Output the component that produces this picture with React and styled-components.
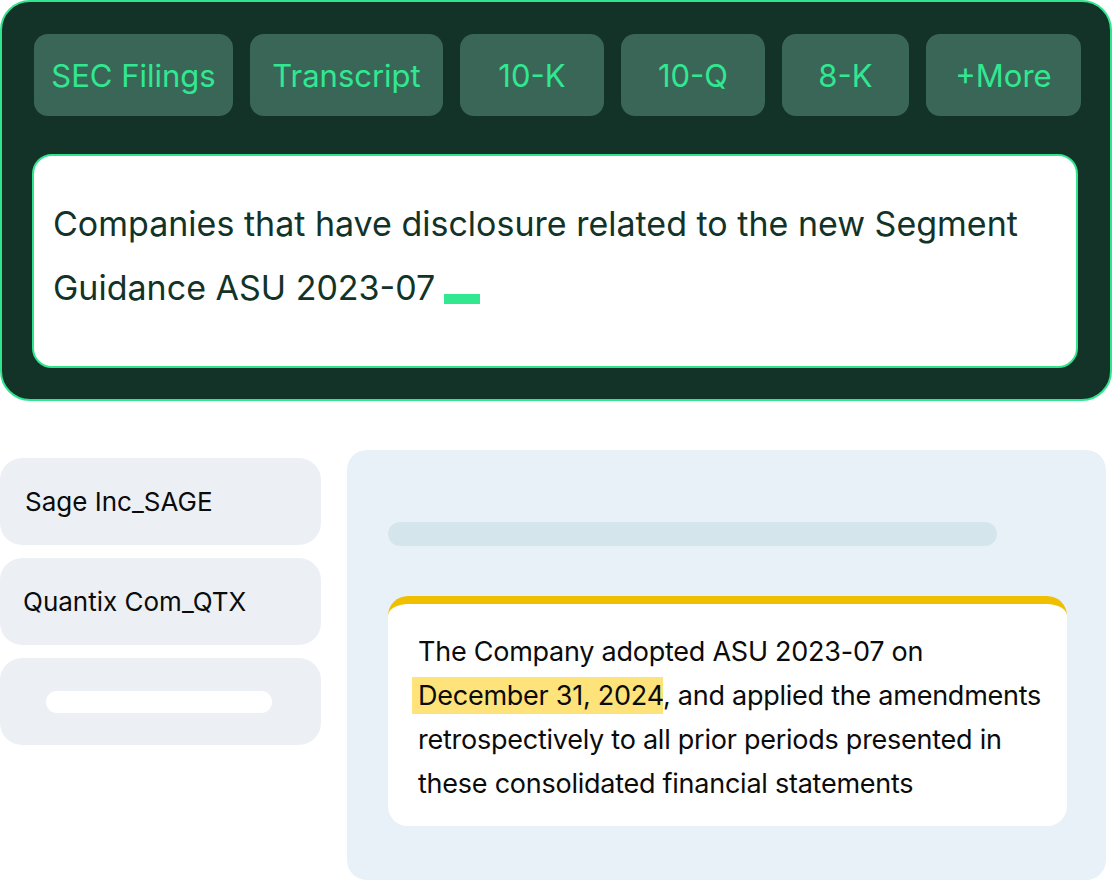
import React from "react";
import styled, { createGlobalStyle } from "styled-components";

const GlobalStyle = createGlobalStyle`
  body {
    margin: 0;
    background: #ffffff;
    font-family: Inter, "Noto Sans", sans-serif;
  }
`;

const Page = styled.div`
  width: 1112px;
  height: 880px;
  overflow: hidden;
  display: flex;
  flex-direction: column;
  gap: 49px;
`;

const SearchPanel = styled.section`
  box-sizing: border-box;
  width: 1112px;
  height: 402px;
  background: #133328;
  border: 2px solid #2fe68f;
  border-radius: 30px;
  padding: 32px 29px 31px 30px;
  display: flex;
  flex-direction: column;
  gap: 38px;
`;

const Tabs = styled.div`
  display: flex;
  justify-content: space-between;
  padding-left: 2px;
`;

const Tab = styled.button`
  box-sizing: border-box;
  width: ${(p) => p.w}px;
  height: 82px;
  border: none;
  border-radius: 14px;
  background: #3a6658;
  color: #31e891;
  font-family: Inter, sans-serif;
  font-size: 31px;
  font-weight: 400;
  display: flex;
  align-items: center;
  justify-content: center;
  padding: 0;
`;

const QueryBox = styled.div`
  box-sizing: border-box;
  height: 214px;
  width: 1046px;
  background: #ffffff;
  border: 2px solid #2fe68f;
  border-radius: 20px;
  padding: 36px 20px 0 19px;
  color: #133328;
  font-size: 34px;
  line-height: 64px;
  letter-spacing: 0;
`;

const Cursor = styled.span`
  display: inline-block;
  width: 36px;
  height: 10px;
  background: #31e891;
  margin-left: 9px;
  vertical-align: -4px;
`;

const Lower = styled.div`
  display: flex;
  gap: 26px;
  align-items: flex-start;
`;

const CompanyList = styled.div`
  width: 321px;
  padding-top: 8px;
  display: flex;
  flex-direction: column;
  gap: 13px;
`;

const CompanyCard = styled.div`
  box-sizing: border-box;
  height: 87px;
  border-radius: 22px;
  background: #ecf0f5;
  display: flex;
  align-items: center;
  padding-left: ${(p) => p.pl || 25}px;
  font-size: 26px;
  color: #0b0b0b;
`;

const Placeholder = styled.div`
  width: 226px;
  height: 22px;
  border-radius: 11px;
  background: #ffffff;
  margin-left: 21px;
`;

const DocPanel = styled.div`
  box-sizing: border-box;
  width: 759px;
  height: 430px;
  background: #e9f1f8;
  border-radius: 20px;
  padding: 72px 39px 0 41px;
  display: flex;
  flex-direction: column;
  gap: 50px;
`;

const SkeletonBar = styled.div`
  width: 609px;
  height: 24px;
  border-radius: 12px;
  background: #d5e5ec;
`;

const Excerpt = styled.div`
  box-sizing: border-box;
  width: 679px;
  height: 230px;
  background: #ffffff;
  border-top: 8px solid #f0bf00;
  border-radius: 20px;
  padding: 26px 10px 0 30px;
  font-size: 27px;
  line-height: 44px;
  color: #0b0b0b;
  letter-spacing: -0.25px;
  white-space: nowrap;
`;

const Mark = styled.span`
  background: #fde37a;
  padding: 2px 0 2px 6px;
  margin-left: -6px;
`;

const tabs = [
  { label: "SEC Filings", w: 199 },
  { label: "Transcript", w: 193 },
  { label: "10-K", w: 144 },
  { label: "10-Q", w: 144 },
  { label: "8-K", w: 127 },
  { label: "+More", w: 155 },
];

export default function App() {
  return (
    <Page>
      <GlobalStyle />
      <SearchPanel>
        <Tabs>
          {tabs.map((t) => (
            <Tab key={t.label} w={t.w}>
              {t.label}
            </Tab>
          ))}
        </Tabs>
        <QueryBox>
          Companies that have disclosure related to the new Segment Guidance
          ASU 2023-07
          <Cursor />
        </QueryBox>
      </SearchPanel>
      <Lower>
        <CompanyList>
          <CompanyCard>Sage Inc_SAGE</CompanyCard>
          <CompanyCard pl={23}>Quantix Com_QTX</CompanyCard>
          <CompanyCard pl={25}>
            <Placeholder />
          </CompanyCard>
        </CompanyList>
        <DocPanel>
          <SkeletonBar />
          <Excerpt>
            The Company adopted ASU 2023-07 on
            <br />
            <Mark>December 31, 2024</Mark>, and applied the amendments
            <br />
            retrospectively to all prior periods presented in
            <br />
            these consolidated financial statements
          </Excerpt>
        </DocPanel>
      </Lower>
    </Page>
  );
}
